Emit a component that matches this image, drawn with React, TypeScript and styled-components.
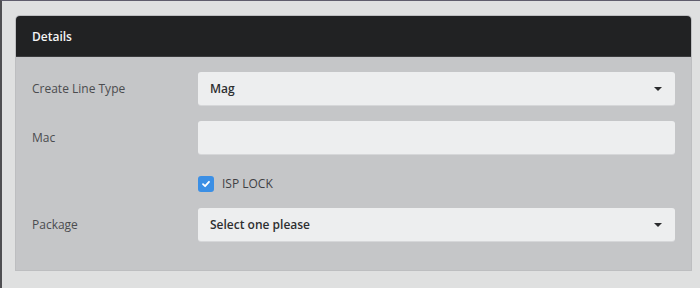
import React from "react";
import styled, { createGlobalStyle } from "styled-components";

const Global = createGlobalStyle`
  html, body { margin: 0; padding: 0; background: #dfe0e0; }
  body { font-family: "Open Sans", "Noto Sans", sans-serif; }
`;

const Frame = styled.div`
  box-sizing: border-box;
  width: 700px;
  height: 288px;
  border-top: 1px solid #5f5d6c;
  border-left: 2px solid #4f4f52;
  background: #dfe0e0;
  padding: 15px 9px 0 14px;
`;

const Card = styled.section`
  border-radius: 4px 4px 0 0;
  overflow: hidden;
  background: #c5c6c8;
  box-shadow: 0 0 0 1px #bdbec0;
`;

const Header = styled.header`
  height: 41px;
  background: #212223;
  color: #f4f4f4;
  font-size: 12px;
  font-weight: 600;
  display: flex;
  align-items: center;
  padding: 0 16px;
  border-bottom: 1px solid #3a3b3d;
  box-sizing: border-box;
`;

const Body = styled.div`
  padding: 15px 16px 29px 16px;
  display: flex;
  flex-direction: column;
  gap: 16px;
`;

const Row = styled.div`
  display: grid;
  grid-template-columns: 166px 1fr;
  align-items: center;
`;

const Label = styled.label`
  font-size: 12px;
  color: #4b4c4f;
`;

const Field = styled.div<{ $select?: boolean }>`
  box-sizing: border-box;
  height: 33px;
  background: #edeeef;
  border-radius: 3px;
  display: flex;
  align-items: center;
  justify-content: space-between;
  padding: 0 13px 0 12px;
  font-size: 12px;
  font-weight: 600;
  color: #2e2f31;
  box-shadow: 0 1px 0 #d6d7d9;
`;

const Caret = styled.span`
  width: 0;
  height: 0;
  border-left: 4px solid transparent;
  border-right: 4px solid transparent;
  border-top: 4px solid #2a2b2d;
`;

const CheckRow = styled.div`
  display: grid;
  grid-template-columns: 166px 1fr;
  align-items: center;
  padding-top: 5px;
`;

const CheckWrap = styled.div`
  display: flex;
  align-items: center;
  gap: 8px;
  font-size: 12px;
  color: #3f4043;
`;

const Box = styled.span`
  width: 16px;
  height: 16px;
  border-radius: 3px;
  background: #3b8fe5;
  display: inline-flex;
  align-items: center;
  justify-content: center;
`;

export default function App() {
  return (
    <>
      <Global />
      <Frame>
        <Card>
          <Header>Details</Header>
          <Body>
            <Row>
              <Label>Create Line Type</Label>
              <Field $select>
                <span>Mag</span>
                <Caret />
              </Field>
            </Row>
            <Row>
              <Label>Mac</Label>
              <Field />
            </Row>
            <CheckRow>
              <span />
              <CheckWrap>
                <Box>
                  <svg width="10" height="10" viewBox="0 0 10 10">
                    <path d="M2 5.2 L4.1 7.2 L8 2.8" fill="none" stroke="#fff" strokeWidth="1.8" strokeLinecap="round" strokeLinejoin="round" />
                  </svg>
                </Box>
                <span>ISP LOCK</span>
              </CheckWrap>
            </CheckRow>
            <Row>
              <Label>Package</Label>
              <Field $select>
                <span>Select one please</span>
                <Caret />
              </Field>
            </Row>
          </Body>
        </Card>
      </Frame>
    </>
  );
}
